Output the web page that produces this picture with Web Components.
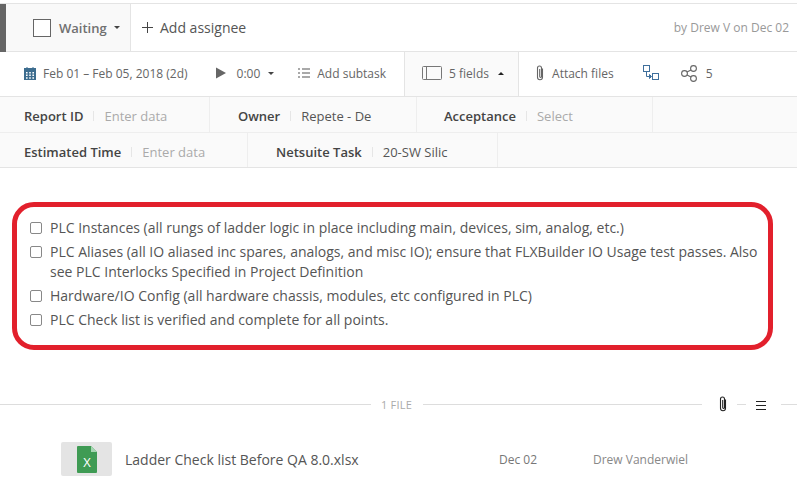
<!DOCTYPE html>
<html>
<head>
<meta charset="utf-8">
<style>
  html, body { margin: 0; padding: 0; background: #fff; }
  body { font-family: "Open Sans", sans-serif; color: #555; width: 797px; height: 500px; overflow: hidden; }
</style>
</head>
<body>
<task-head></task-head>
<task-tools></task-tools>
<task-fields>
  <field-row>
    <field-cell label="Report ID" value="Enter data" empty width="210" pad="24"></field-cell>
    <field-cell label="Owner" value="Repete - De" width="207" pad="28"></field-cell>
    <field-cell label="Acceptance" value="Select" empty width="236" pad="27"></field-cell>
  </field-row>
  <field-row>
    <field-cell label="Estimated Time" value="Enter data" empty width="248" pad="24"></field-cell>
    <field-cell label="Netsuite Task" value="20-SW Silic" width="250" pad="28"></field-cell>
  </field-row>
</task-fields>
<check-list>
  <check-item>PLC Instances (all rungs of ladder logic in place including main, devices, sim, analog, etc.)</check-item>
  <check-item>PLC Aliases (all IO aliased inc spares, analogs, and misc IO); ensure that FLXBuilder IO Usage test passes. Also see PLC Interlocks Specified in Project Definition</check-item>
  <check-item>Hardware/IO Config (all hardware chassis, modules, etc configured in PLC)</check-item>
  <check-item>PLC Check list is verified and complete for all points.</check-item>
</check-list>
<file-divider></file-divider>
<file-row name="Ladder Check list Before QA 8.0.xlsx" date="Dec 02" user="Drew Vanderwiel"></file-row>

<script>
const clip = `<svg width="10" height="16" viewBox="0 0 10 16" fill="none" stroke="currentColor" stroke-width="1.1"><path d="M7.5 3.5v8.7a2.5 2.5 0 0 1-5 0V3a2 2 0 0 1 4 0v8.6a.9.9 0 0 1-1.8 0V4"/></svg>`

class TaskHead extends HTMLElement {
  constructor () {
    super()
    this.attachShadow({ mode: 'open' }).innerHTML = `
    <style>
      :host { display: flex; height: 47px; margin-top: 3px; border-top: 1px solid #e4e4e4; border-bottom: 1px solid #e4e4e4; font-size: 13px; }
      .bar { width: 6px; background: #666; flex: none; margin-bottom: -1px; }
      .status { width: 125px; background: #f9f9f9; border-right: 1px solid #e4e4e4; display: flex; align-items: center; padding-left: 27px; box-sizing: border-box; flex: none; }
      .box { width: 16px; height: 16px; border: 1px solid #666; background: #fff; flex: none; }
      .state { margin-left: 8px; color: #707070; font-weight: 600; }
      .caret { margin-left: 7px; width: 0; height: 0; border: 3px solid transparent; border-top: 3px solid #444; border-bottom: 0; }
      .add { display: flex; align-items: center; padding-left: 11px; font-size: 14px; color: #555; flex: none; }
      .add svg { margin-right: 7px; }
      .by { margin-left: auto; padding-right: 8px; align-self: center; font-size: 12px; color: #999; }
    </style>
    <div class="bar"></div>
    <div class="status">
      <span class="box"></span><span class="state">Waiting</span><span class="caret"></span>
    </div>
    <div class="add"><svg width="11" height="11" viewBox="0 0 11 11" stroke="#444" stroke-width="1"><path d="M5.500 0v11M0 5.500h11"/></svg>Add assignee</div>
    <div class="by">by Drew V on Dec 02</div>`
  }
}

class TaskTools extends HTMLElement {
  constructor () {
    super()
    this.attachShadow({ mode: 'open' }).innerHTML = `
    <style>
      :host { display: flex; height: 44px; border-bottom: 1px solid #e4e4e4; font-size: 12px; color: #666; align-items: stretch; }
      .t { display: flex; align-items: center; flex: none; box-sizing: border-box; padding-bottom: 2px; }
      .fields { background: #fafafa; border-left: 1px solid #e4e4e4; border-right: 1px solid #e4e4e4; width: 115px; padding-left: 17px; margin-left: 18px; }
      .caret { width: 0; height: 0; border: 3px solid transparent; }
      .down { border-top: 3px solid #444; border-bottom: 0; }
      .up { border-bottom: 3px solid #222; border-top: 0; }
    </style>
    <div class="t" style="margin-left:24px">
      <svg width="12" height="13" viewBox="0 0 12 13"><rect y="1" width="12" height="12" fill="#3d6d8f"/><path d="M3 0v2M9 0v2" stroke="#3d6d8f"/><path d="M2 5h1.600v1.500H2zM5.200 5h1.600v1.500H5.200zM8.400 5H10v1.500H8.400zM2 7.600h1.600v1.500H2zM5.200 7.600h1.600v1.500H5.200zM8.400 7.600H10v1.500H8.400zM2 10.200h1.600v1.500H2zM5.200 10.200h1.600v1.500H5.200zM8.400 10.200H10v1.500H8.400z" fill="#fff"/></svg>
      <span style="margin-left:7px">Feb 01 – Feb 05, 2018 (2d)</span>
    </div>
    <div class="t" style="margin-left:28px">
      <svg width="10" height="12" viewBox="0 0 10 12"><path d="M0 .5 10 6 0 11.500z" fill="#666"/></svg>
      <span style="margin-left:11px">0:00</span>
      <span class="caret down" style="margin-left:8px"></span>
    </div>
    <div class="t" style="margin-left:24px">
      <svg width="12" height="10" viewBox="0 0 12 10" stroke="#555" stroke-width="1.2"><path d="M0 1h2M4 1h8M0 5h2M4 5h8M0 9h2M4 9h8"/></svg>
      <span style="margin-left:7px">Add subtask</span>
    </div>
    <div class="t fields">
      <svg width="20" height="14" viewBox="0 0 20 14" fill="none" stroke="#777"><rect x=".5" y=".5" width="19" height="13" rx="1"/><path d="M4.500 1v12"/></svg>
      <span style="margin-left:7px">5 fields</span>
      <span class="caret up" style="margin-left:9px"></span>
    </div>
    <div class="t" style="margin-left:16px">${clip}<span style="margin-left:7px">Attach files</span></div>
    <div class="t" style="margin-left:29px">
      <svg width="16" height="16" viewBox="0 0 16 16" fill="none" stroke="#3f6f9c" stroke-width="1"><rect x=".5" y=".5" width="6" height="6"/><rect x="9.500" y="8.500" width="6" height="6"/><path d="M3.500 7v4.500h4"/><path d="M6.500 9.500l2 2-2 2z" fill="#3f6f9c"/></svg>
    </div>
    <div class="t" style="margin-left:22px">
      <svg width="17" height="17" viewBox="0 0 17 17" fill="none" stroke="#666" stroke-width="1.100"><circle cx="3.500" cy="8.500" r="2.900"/><circle cx="12.500" cy="3.500" r="2.900"/><circle cx="12.500" cy="13.500" r="2.900"/><path d="M6 7l4-2M6 10l4 2"/></svg>
      <span style="margin-left:8px">5</span>
    </div>`
  }
}

class TaskFields extends HTMLElement {
  constructor () {
    super()
    this.attachShadow({ mode: 'open' }).innerHTML = `
    <style>
      :host { display: block; background: #fafafa; border-bottom: 1px solid #e4e4e4; }
    </style>
    <slot></slot>`
  }
}

class FieldRow extends HTMLElement {
  constructor () {
    super()
    this.attachShadow({ mode: 'open' }).innerHTML = `
    <style>
      :host { display: flex; height: 34px; }
      :host(:first-child) { height: 35px; border-bottom: 1px solid #eee; }
    </style>
    <slot></slot>`
  }
}

class FieldCell extends HTMLElement {
  constructor () {
    super()
    const root = this.attachShadow({ mode: 'open' })
    const empty = this.hasAttribute('empty')
    root.innerHTML = `
    <style>
      :host { display: flex; align-items: center; box-sizing: border-box; border-right: 1px solid #eee; font-size: 13px; flex: none; white-space: nowrap; padding-top: 3px; }
      .l { color: #444; font-weight: 600; }
      .sep { width: 1px; height: 10px; background: #e6e6e6; margin: 0 10px; flex: none; }
      .v { color: ${empty ? '#aaa' : '#555'}; }
    </style>
    <span class="l"></span><span class="sep"></span><span class="v"></span>`
    root.querySelector('.l').textContent = this.getAttribute('label')
    root.querySelector('.v').textContent = this.getAttribute('value')
    this.style.width = this.getAttribute('width') + 'px'
    this.style.paddingLeft = this.getAttribute('pad') + 'px'
  }
}

class CheckList extends HTMLElement {
  constructor () {
    super()
    this.attachShadow({ mode: 'open' }).innerHTML = `
    <style>
      :host { display: block; box-sizing: border-box; width: 761px; height: 148px; margin: 34px 0 0 12px; border: 5px solid #e2202c; border-radius: 22px; padding: 9px 10px 0 13px; }
    </style>
    <slot></slot>`
  }
}

class CheckItem extends HTMLElement {
  constructor () {
    super()
    this.attachShadow({ mode: 'open' }).innerHTML = `
    <style>
      :host { display: flex; font-size: 14px; line-height: 20px; color: #555; padding: 2px 0; }
      .c { width: 10px; height: 10px; border: 1px solid #888; border-radius: 2px; flex: none; margin: 4px 8px 0 0; background: #fff; }
    </style>
    <span class="c"></span><span><slot></slot></span>`
  }
}

class FileDivider extends HTMLElement {
  constructor () {
    super()
    this.attachShadow({ mode: 'open' }).innerHTML = `
    <style>
      :host { display: flex; align-items: center; height: 20px; margin-top: 44px; font-size: 11px; color: #aaa; }
      i { display: block; height: 1px; background: #ddd; flex: none; }
      span { margin: 0 10px; letter-spacing: .2px; flex: none; width: 32px; white-space: nowrap; }
      .clip { color: #222; margin-left: 16px; width: 10px; display: flex; }
      .menu { margin: 3px 15px 0 10px; flex: none; }
    </style>
    <i style="width:371px"></i><span>1 FILE</span><i style="width:279px"></i>
    <div class="clip">${clip}</div>
    <i style="width:9px;margin-left:9px"></i>
    <svg class="menu" width="10" height="9" viewBox="0 0 10 9" stroke="#222"><path d="M0 .5h10M0 4.500h10M0 8.500h10"/></svg>
    <i style="width:16px"></i>`
  }
}

class FileRow extends HTMLElement {
  constructor () {
    super()
    const root = this.attachShadow({ mode: 'open' })
    root.innerHTML = `
    <style>
      :host { display: flex; align-items: center; margin-top: 28px; padding-left: 61px; height: 34px; }
      .thumb { width: 51px; height: 34px; background: #e4e4e4; border-radius: 2px; display: flex; align-items: center; justify-content: center; flex: none; }
      .name { margin-left: 13px; width: 374px; font-size: 14px; color: #555; flex: none; white-space: nowrap; }
      .date { width: 94px; font-size: 12px; color: #777; flex: none; }
      .user { font-size: 12px; color: #888; flex: none; }
      text { font-family: "Open Sans", sans-serif; }
    </style>
    <div class="thumb">
      <svg width="20" height="27" viewBox="0 0 20 27"><path d="M1 0h13l6 6v20a1 1 0 0 1-1 1H1a1 1 0 0 1-1-1V1a1 1 0 0 1 1-1z" fill="#3f9b54"/><path d="M14 0l6 6h-6z" fill="#a6d6b2"/><text x="10" y="21" text-anchor="middle" font-size="13" fill="#fff">X</text></svg>
    </div>
    <div class="name"></div><div class="date"></div><div class="user"></div>`
    root.querySelector('.name').textContent = this.getAttribute('name')
    root.querySelector('.date').textContent = this.getAttribute('date')
    root.querySelector('.user').textContent = this.getAttribute('user')
  }
}

customElements.define('task-head', TaskHead)
customElements.define('task-tools', TaskTools)
customElements.define('task-fields', TaskFields)
customElements.define('field-row', FieldRow)
customElements.define('field-cell', FieldCell)
customElements.define('check-list', CheckList)
customElements.define('check-item', CheckItem)
customElements.define('file-divider', FileDivider)
customElements.define('file-row', FileRow)
</script>
</body>
</html>
